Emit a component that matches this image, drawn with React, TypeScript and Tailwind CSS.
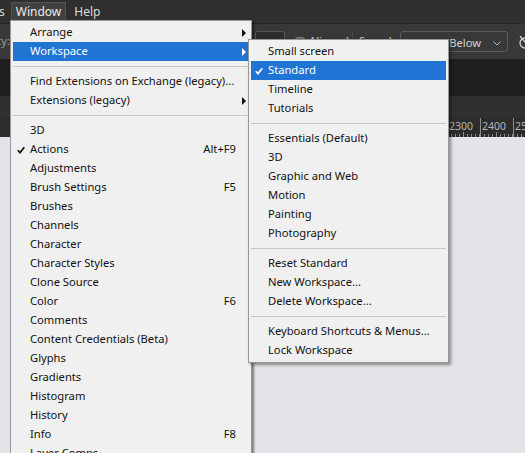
import clsx from 'clsx'

type Item =
  | 'sep'
  | { label: string; shortcut?: string; sub?: boolean; checked?: boolean; active?: boolean }

const windowMenu: Item[] = [
  { label: 'Arrange', sub: true },
  { label: 'Workspace', sub: true, active: true },
  'sep',
  { label: 'Find Extensions on Exchange (legacy)...' },
  { label: 'Extensions (legacy)', sub: true },
  'sep',
  { label: '3D' },
  { label: 'Actions', shortcut: 'Alt+F9', checked: true },
  { label: 'Adjustments' },
  { label: 'Brush Settings', shortcut: 'F5' },
  { label: 'Brushes' },
  { label: 'Channels' },
  { label: 'Character' },
  { label: 'Character Styles' },
  { label: 'Clone Source' },
  { label: 'Color', shortcut: 'F6' },
  { label: 'Comments' },
  { label: 'Content Credentials (Beta)' },
  { label: 'Glyphs' },
  { label: 'Gradients' },
  { label: 'Histogram' },
  { label: 'History' },
  { label: 'Info', shortcut: 'F8' },
  { label: 'Layer Comps' },
  { label: 'Layers', shortcut: 'F7' },
]

const workspaceMenu: Item[] = [
  { label: 'Small screen' },
  { label: 'Standard', checked: true, active: true },
  { label: 'Timeline' },
  { label: 'Tutorials' },
  'sep',
  { label: 'Essentials (Default)' },
  { label: '3D' },
  { label: 'Graphic and Web' },
  { label: 'Motion' },
  { label: 'Painting' },
  { label: 'Photography' },
  'sep',
  { label: 'Reset Standard' },
  { label: 'New Workspace...' },
  { label: 'Delete Workspace...' },
  'sep',
  { label: 'Keyboard Shortcuts & Menus...' },
  { label: 'Lock Workspace' },
]

function Check({ white }: { white?: boolean }) {
  return (
    <svg width="8" height="8" viewBox="0 0 8 8">
      <path d="M0.8 4.2 L3 6.6 L7.3 1.2" fill="none" stroke={white ? '#fff' : '#111'} strokeWidth="1.7" />
    </svg>
  )
}

function Arrow({ white }: { white?: boolean }) {
  return (
    <svg width="4" height="8" viewBox="0 0 4 8">
      <path d="M0 0 L4 4 L0 8 Z" fill={white ? '#fff' : '#111'} />
    </svg>
  )
}

function MenuList({ items }: { items: Item[] }) {
  return (
    <>
      {items.map((item, i) =>
        item === 'sep' ? (
          <div key={i} className="flex h-[11px] items-center">
            <div className="h-px w-full bg-[#c6c6c6]" />
          </div>
        ) : (
          <div
            key={i}
            className={clsx(
              'flex h-[19px] items-center whitespace-nowrap',
              item.active ? 'bg-[#1f74d4] text-white' : 'text-[#111]'
            )}
          >
            <span className="flex w-[17px] shrink-0 pl-[4px]">{item.checked && <Check white={item.active} />}</span>
            <span className="flex-1">{item.label}</span>
            {item.shortcut && <span>{item.shortcut}</span>}
            <span className="flex w-[13px] shrink-0 justify-end pr-[3px]">{item.sub && <Arrow white={item.active} />}</span>
          </div>
        )
      )}
    </>
  )
}

function Ruler() {
  const labels = Array.from({ length: 16 }, (_, i) => 1000 + i * 100)
  return (
    <div className="flex h-[19px] shrink-0 bg-[#2c2c2c] pl-[18px]">
      {labels.map((n) => (
        <div key={n} className="relative h-full w-[33px] shrink-0 border-l border-[#8c8c8c]">
          <span className="absolute left-[1px] top-[2px] text-[10.5px] leading-[12px] text-[#b4b4b4]">{n}</span>
          <div className="absolute bottom-0 left-0 flex h-[3px] w-full">
            {Array.from({ length: 8 }, (_, k) => (
              <div
                key={k}
                className={clsx('w-[4.125px] self-end border-r border-[#8c8c8c]', k === 3 ? 'h-[5px]' : 'h-[3px]')}
              />
            ))}
          </div>
        </div>
      ))}
    </div>
  )
}

export default function App() {
  return (
    <div className="relative flex h-[453px] w-[525px] flex-col overflow-hidden bg-[#e4e4e8] font-['Noto_Sans',sans-serif] text-[11.2px]">
      {/* menu bar */}
      <div className="flex h-[23px] shrink-0 items-center bg-[#2f2f2f] text-[12px] text-[#dcdcdc]">
        <span className="-ml-[1px]">s</span>
        <span className="ml-[6px] flex h-[19px] items-center border border-[#525252] bg-[#414141] px-[4px] text-[#ececec]">
          Window
        </span>
        <span className="ml-[8px]">Help</span>
      </div>

      {/* options bar */}
      <div className="flex h-[36px] shrink-0 items-center border-t border-[#262626] bg-[#383838] text-[#c8c8c8]">
        <div className="flex w-[10px] shrink-0 justify-end overflow-hidden">
          <span className="whitespace-nowrap text-[#9a9a9a]">Opacity:</span>
        </div>
        <div className="ml-[245px] h-[21px] w-[30px] shrink-0 rounded-[2px] border border-[#555] bg-[#2d2d2d]" />
        <div className="ml-[10px] h-[10px] w-[10px] shrink-0 rounded-[3px] border border-[#888] bg-[#555]" />
        <span className="ml-[4px] w-[38px] shrink-0 whitespace-nowrap">Aligned</span>
        <div className="ml-[5px] h-[22px] w-px shrink-0 bg-[#4a4a4a]" />
        <span className="ml-[6px] w-[30px] shrink-0 whitespace-nowrap">Sample:</span>
        <div className="ml-[11px] flex h-[21px] w-[108px] shrink-0 items-center overflow-hidden rounded-[3px] border border-[#5a5a5a] pr-[6px] pt-[3px] text-[#d2d2d2]">
          <span className="-ml-[6px] flex-1 whitespace-nowrap">Current &amp; Below</span>
          <svg className="shrink-0" width="8" height="5" viewBox="0 0 8 5">
            <path d="M0.5 0.5 L4 4 L7.5 0.5" fill="none" stroke="#bbb" strokeWidth="1" />
          </svg>
        </div>
        <svg className="ml-[10px] shrink-0" width="14" height="16" viewBox="0 0 14 16">
          <circle cx="7" cy="9" r="5" fill="none" stroke="#cfcfcf" strokeWidth="1.3" />
          <path d="M2 2 L12 14" stroke="#cfcfcf" strokeWidth="1.3" />
        </svg>
      </div>

      {/* document tabs */}
      <div className="h-[37px] shrink-0 bg-[#1e1e1e]" />
      <div className="h-[22px] shrink-0 bg-[#303030]" />
      <Ruler />
      <div className="flex-1 bg-[#e4e4e8]" />

      {/* Window menu */}
      <div className="absolute left-[10px] top-[20px] z-10 w-[242px] border border-[#979797] bg-[#f0f0f0] px-[2px] pt-[2px] shadow-[2px_2px_2px_rgba(0,0,0,0.45)]">
        <MenuList items={windowMenu} />
      </div>

      {/* Workspace submenu */}
      <div className="absolute left-[248px] top-[39px] z-20 w-[201px] border border-[#979797] bg-[#f0f0f0] px-[2px] pb-[2px] pt-[2px] shadow-[2px_2px_3px_rgba(0,0,0,0.4)]">
        <MenuList items={workspaceMenu} />
      </div>
    </div>
  )
}
